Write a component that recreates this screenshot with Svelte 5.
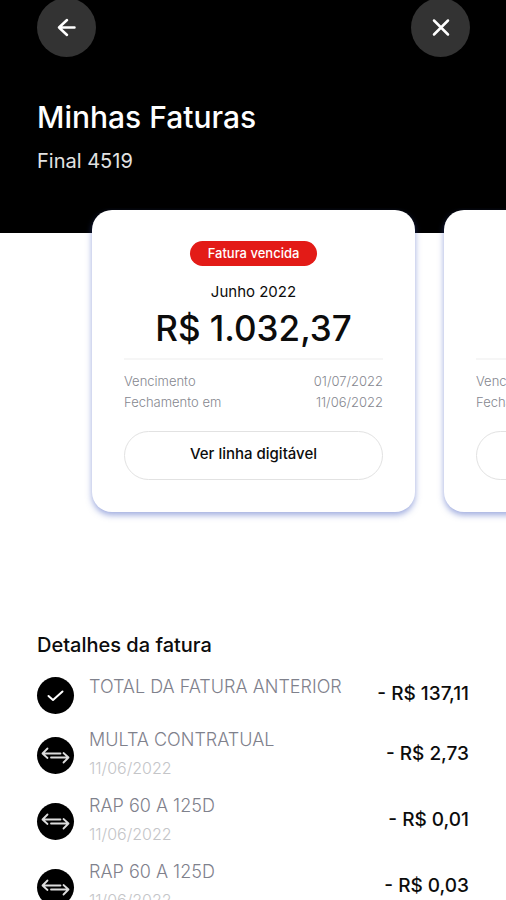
<script>
  const cardEnding = '4519';

  const invoices = [
    {
      status: 'Fatura vencida',
      month: 'Junho 2022',
      total: 'R$ 1.032,37',
      dueDate: '01/07/2022',
      closingDate: '11/06/2022'
    },
    {
      status: 'Fatura vencida',
      month: 'Maio 2022',
      total: 'R$ 137,11',
      dueDate: '01/06/2022',
      closingDate: '11/05/2022'
    }
  ];

  const entries = [
    { type: 'paid', label: 'TOTAL DA FATURA ANTERIOR', date: '', amount: '- R$ 137,11' },
    { type: 'transfer', label: 'MULTA CONTRATUAL', date: '11/06/2022', amount: '- R$ 2,73' },
    { type: 'transfer', label: 'RAP 60 A 125D', date: '11/06/2022', amount: '- R$ 0,01' },
    { type: 'transfer', label: 'RAP 60 A 125D', date: '11/06/2022', amount: '- R$ 0,03' }
  ];
</script>

<div class="page">
  <header class="header">
    <nav class="nav">
      <button type="button" class="nav-button" aria-label="Voltar">
        <svg width="20" height="20" viewBox="0 0 20 20" aria-hidden="true">
          <path d="M17.5 9.5H2M10 2L2 9.5L10 17" />
        </svg>
      </button>
      <button type="button" class="nav-button" aria-label="Fechar">
        <svg width="20" height="20" viewBox="0 0 20 20" aria-hidden="true">
          <path d="M3 2.5L17 16.5M17 2.5L3 16.5" />
        </svg>
      </button>
    </nav>
    <h1 class="title">Minhas Faturas</h1>
    <p class="subtitle">Final {cardEnding}</p>
  </header>

  <section class="carousel" aria-label="Faturas">
    {#each invoices as invoice}
      <article class="card">
        <span class="badge">{invoice.status}</span>
        <h2 class="month">{invoice.month}</h2>
        <p class="total">{invoice.total}</p>
        <dl class="dates">
          <div class="date-row">
            <dt>Vencimento</dt>
            <dd>{invoice.dueDate}</dd>
          </div>
          <div class="date-row">
            <dt>Fechamento em</dt>
            <dd>{invoice.closingDate}</dd>
          </div>
        </dl>
        <button type="button" class="code-button">Ver linha digitável</button>
      </article>
    {/each}
  </section>

  <section class="details">
    <h2 class="details-title">Detalhes da fatura</h2>
    <ul class="entries">
      {#each entries as entry}
        <li class="entry">
          <span class="entry-icon">
            <svg width="37" height="37" viewBox="0 0 37 37" aria-hidden="true">
              {#if entry.type === 'paid'}
                <path class="check" d="M11.5 19L16 23L25.5 14.5" />
              {:else}
                <path d="M23.5 16.5H5.5M10.5 11.5L5.5 16.5L10.5 21" />
                <path d="M14 20.5H31.5M26.5 16L31.5 20.5L26.5 25.5" />
              {/if}
            </svg>
          </span>
          <div class="entry-text">
            <span class="entry-label">{entry.label}</span>
            {#if entry.date}
              <span class="entry-date">{entry.date}</span>
            {/if}
          </div>
          <span class="entry-amount">{entry.amount}</span>
        </li>
      {/each}
    </ul>
  </section>
</div>

<style>
  :global(body) {
    margin: 0;
    background: #fff;
  }

  .page {
    font-family: Inter, 'Open Sans', sans-serif;
    color: #0c0c0c;
    overflow: hidden;
  }

  h1,
  h2,
  p,
  dl,
  dd,
  ul {
    margin: 0;
    padding: 0;
  }

  button {
    font-family: inherit;
    cursor: pointer;
  }

  .header {
    margin-top: -2px;
    padding: 0 36px 58px 37px;
    background: #000;
    color: #fff;
  }

  .nav {
    display: flex;
    justify-content: space-between;
  }

  .nav-button {
    display: flex;
    align-items: center;
    justify-content: center;
    width: 59px;
    height: 59px;
    padding: 0;
    border: none;
    border-radius: 50%;
    background: #333;
  }

  .nav-button path {
    fill: none;
    stroke: #fff;
    stroke-width: 2.5;
    stroke-linecap: round;
    stroke-linejoin: round;
  }

  .title {
    margin-top: 40px;
    font-size: 30px;
    font-weight: 500;
    line-height: 40px;
  }

  .subtitle {
    margin-top: 10px;
    color: #e2e2e2;
    font-size: 20px;
    font-weight: 400;
    line-height: 28px;
  }

  /* Bottom padding leaves room for the card shadow inside the scroller */
  .carousel {
    display: flex;
    gap: 29px;
    margin-top: -25px;
    padding: 2px 91px 30px 92px;
    overflow-x: auto;
    scrollbar-width: none;
  }

  .card {
    display: flex;
    flex: 0 0 100%;
    flex-direction: column;
    align-items: center;
    box-sizing: border-box;
    padding: 31px 32px 32px;
    border-radius: 20px;
    background: #fff;
    box-shadow: 0 3px 6px rgba(60, 85, 190, 0.5);
  }

  .badge {
    padding: 0 18px;
    border-radius: 13px;
    background: #e31b17;
    color: #fff;
    font-size: 13px;
    font-weight: 500;
    line-height: 25px;
  }

  .month {
    margin-top: 16px;
    font-size: 15px;
    font-weight: 400;
    line-height: 20px;
  }

  .total {
    margin-top: 4px;
    font-size: 35px;
    font-weight: 500;
    line-height: 44px;
  }

  .dates {
    align-self: stretch;
    margin-top: 8px;
    padding-top: 11px;
    border-top: 2px solid #f6f6f6;
    color: #85878f;
    font-size: 13px;
    font-weight: 300;
    line-height: 21px;
  }

  .date-row {
    display: flex;
    justify-content: space-between;
  }

  .code-button {
    align-self: stretch;
    height: 49px;
    margin-top: 18px;
    padding: 0 0 4px;
    border: 1px solid #e2e2e2;
    border-radius: 25px;
    background: #fff;
    color: #0c0c0c;
    font-size: 15px;
    font-weight: 500;
  }

  .details {
    padding: 89px 37px 24px;
  }

  .details-title {
    font-size: 20px;
    font-weight: 500;
    line-height: 28px;
  }

  .entries {
    display: flex;
    flex-direction: column;
    gap: 10px;
    margin-top: 14px;
    padding: 0;
    list-style: none;
  }

  .entry {
    display: flex;
    align-items: center;
    min-height: 43px;
  }

  .entry-icon {
    display: flex;
    margin: 2px 15px 0 0;
    border-radius: 50%;
    background: #000;
  }

  .entry-icon path {
    fill: none;
    stroke: #ddd;
    stroke-width: 1.8;
    stroke-linecap: round;
    stroke-linejoin: round;
  }

  .entry-icon .check {
    stroke: #fff;
    stroke-width: 2;
  }

  .entry-text {
    display: flex;
    flex: 1;
    flex-direction: column;
    align-self: flex-start;
    line-height: 28px;
  }

  .entry-label {
    color: #7f818c;
    font-size: 18px;
    font-weight: 300;
    white-space: nowrap;
  }

  .entry-date {
    color: #c4c5c8;
    font-size: 16px;
    font-weight: 300;
  }

  .entry-amount {
    padding-bottom: 2px;
    font-size: 19px;
    font-weight: 500;
    white-space: nowrap;
  }
</style>
